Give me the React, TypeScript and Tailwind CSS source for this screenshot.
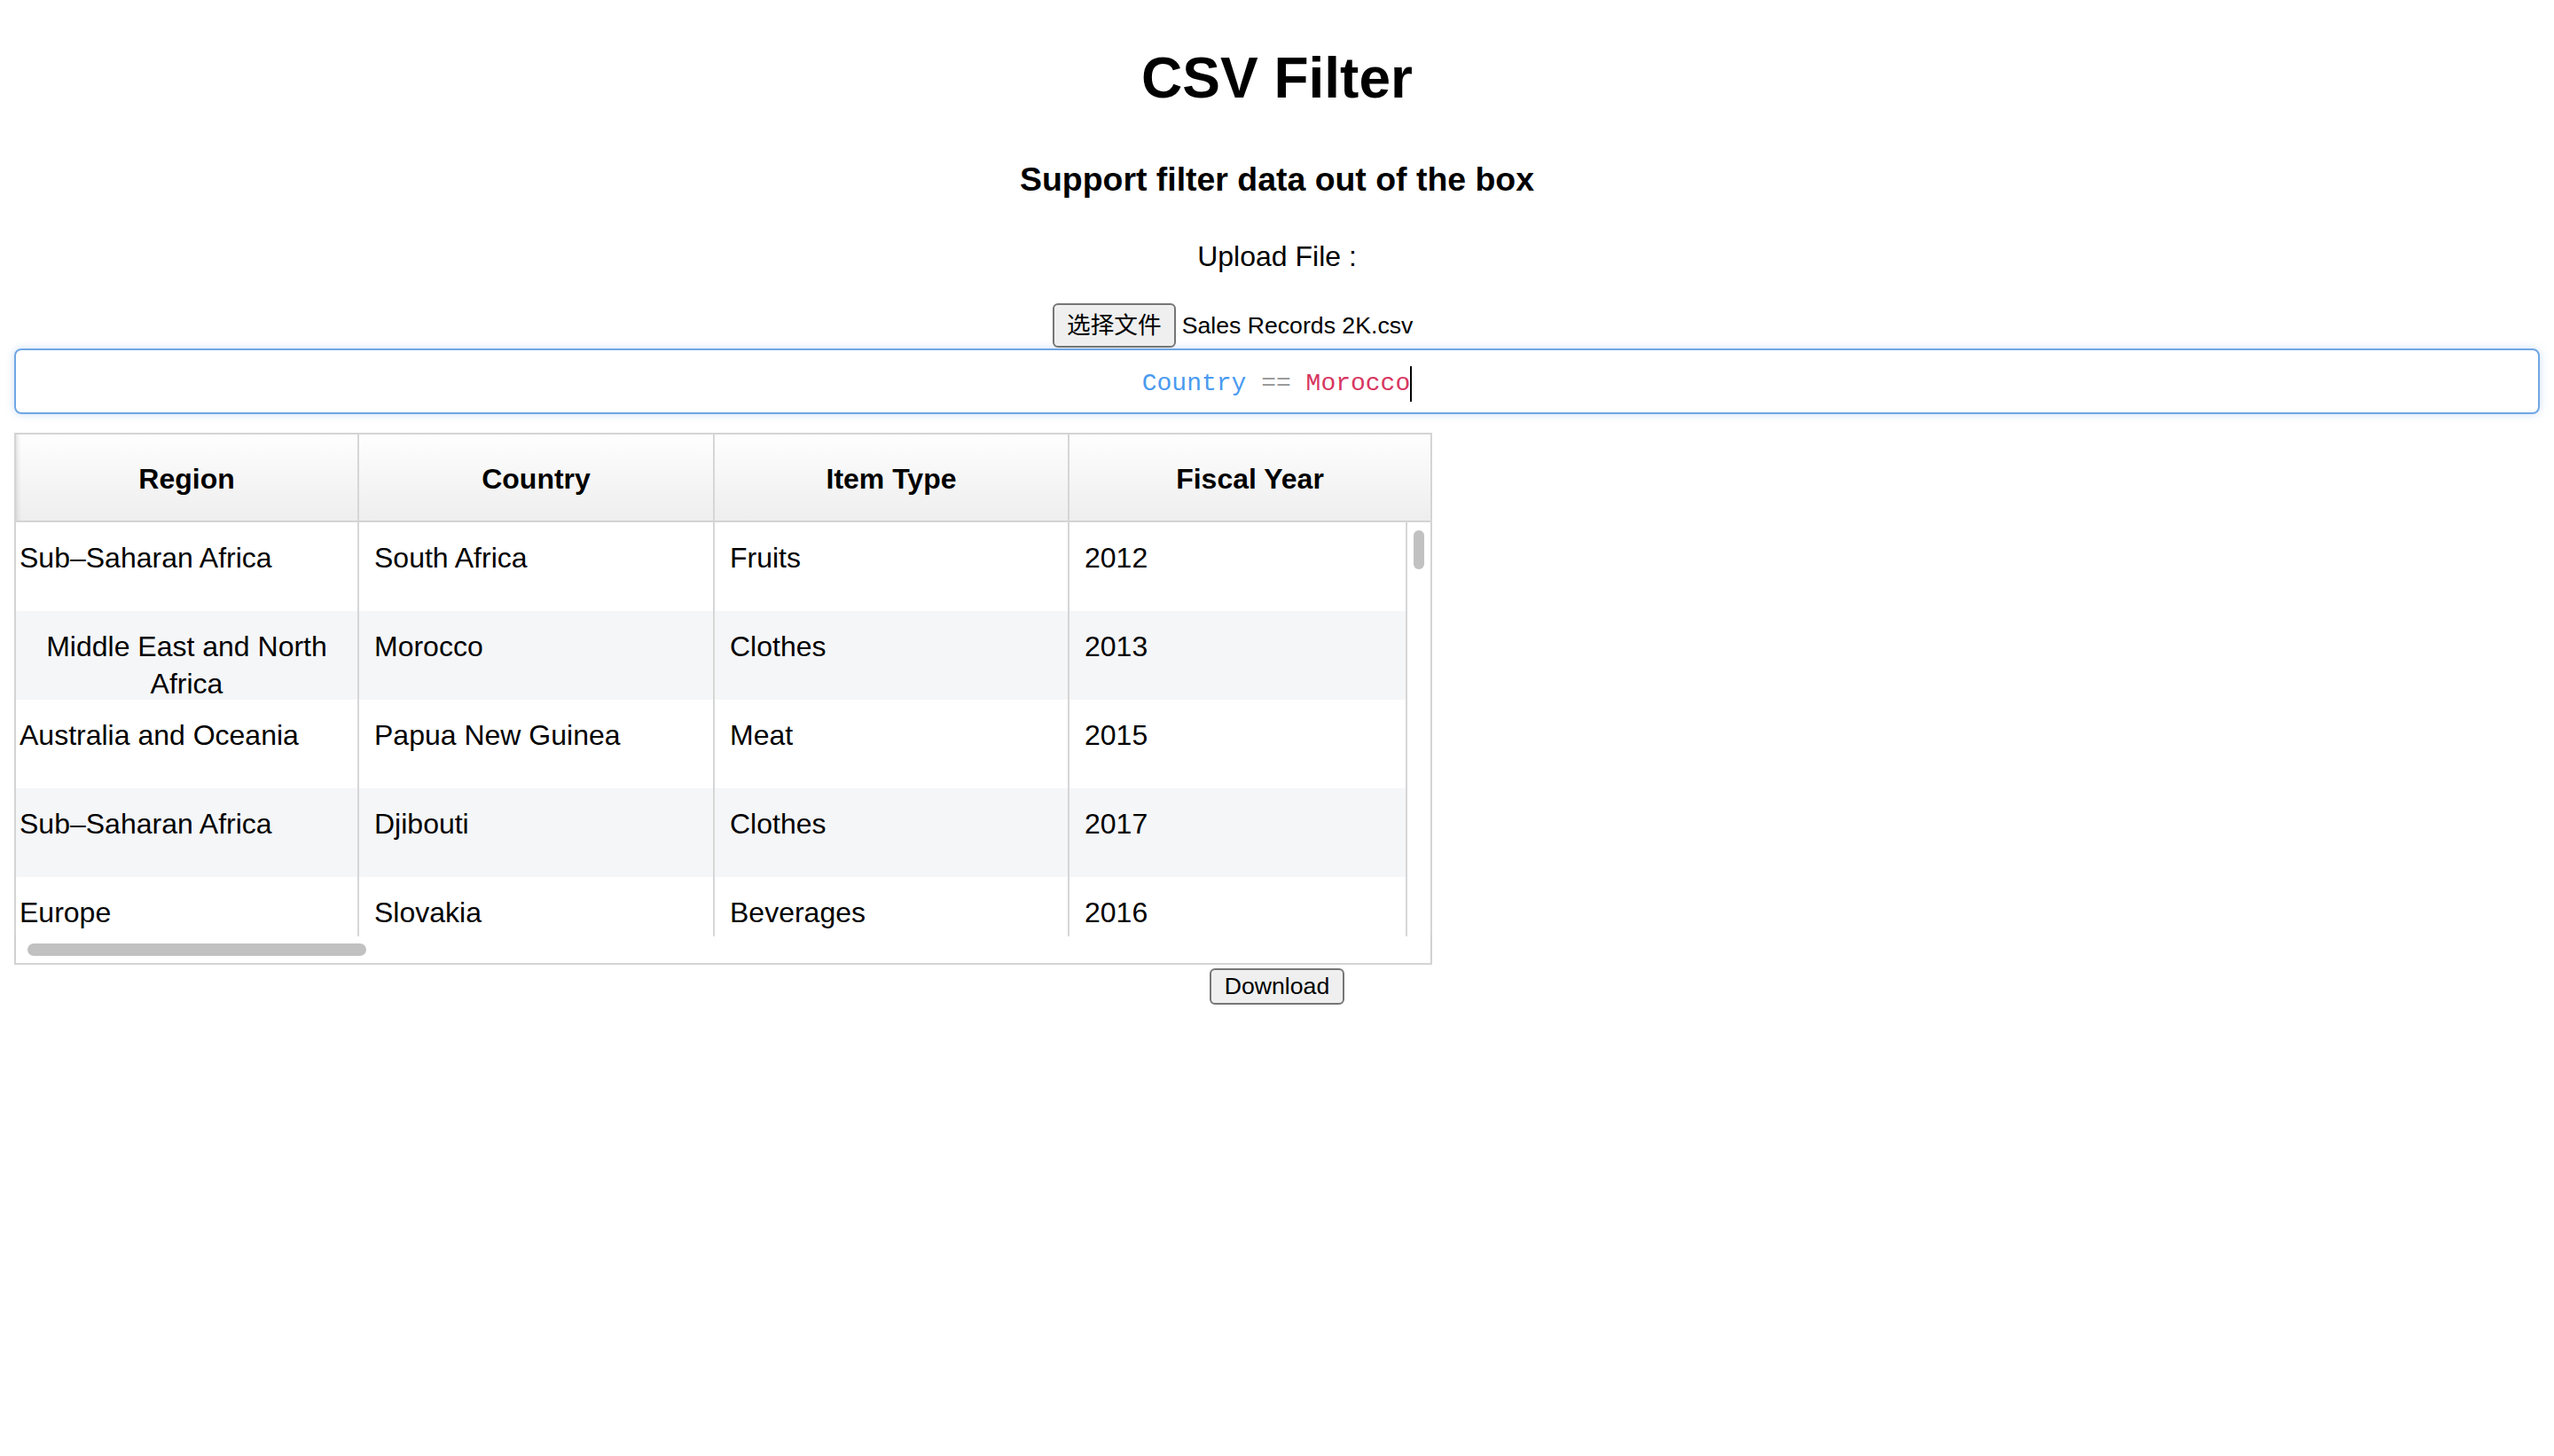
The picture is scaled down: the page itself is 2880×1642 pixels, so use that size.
import React from "react";

const rows = [
  { region: "Sub–Saharan Africa", country: "South Africa", item: "Fruits", year: "2012" },
  { region: "Middle East and North Africa", country: "Morocco", item: "Clothes", year: "2013", center: true },
  { region: "Australia and Oceania", country: "Papua New Guinea", item: "Meat", year: "2015" },
  { region: "Sub–Saharan Africa", country: "Djibouti", item: "Clothes", year: "2017" },
  { region: "Europe", country: "Slovakia", item: "Beverages", year: "2016" },
];

export default function App() {
  return (
    <div className="min-h-screen bg-white pt-[43px] pb-[40px] text-black font-['Liberation_Sans','Noto_Sans_CJK_SC',sans-serif]">
      {/* Title */}
      <h1 className="text-center text-[64px] leading-[90px] font-bold">CSV Filter</h1>
      <h3 className="mt-[43px] text-center text-[37.44px] leading-[52px] font-bold">
        Support filter data out of the box
      </h3>
      <p className="mt-[39px] text-center text-[32px] leading-[45px]">Upload File :</p>

      {/* File picker */}
      <div className="mt-[30px] flex justify-center">
        <div className="w-[506px] flex items-center gap-[7px] h-[50px]">
          <button className="h-[50px] px-[14px] bg-[#efefef] border-2 border-[#767676] rounded-[6px] text-[26.67px] leading-none">
            选择文件
          </button>
          <span className="text-[26.67px] leading-none">Sales Records 2K.csv</span>
        </div>
      </div>

      {/* Filter input */}
      <div className="mt-[1px] mx-[16px] h-[74px] pt-[5px] border-2 border-[#70a6e4] rounded-[8px] shadow-[0_0_10px_rgba(110,165,230,0.35)] flex items-center justify-center font-['Liberation_Mono',monospace] text-[28px]">
        <span className="text-[#4a9af0]">Country</span>
        <span className="text-[#9a9a9a]">&nbsp;==&nbsp;</span>
        <span className="text-[#d7365f]">Morocco</span>
        <span className="w-[2px] h-[40px] bg-black" />
      </div>

      {/* Table */}
      <div className="mt-[21px] ml-[16px] w-[1599px] border-2 border-[#d4d4d4]">
        <div className="h-[99px] grid grid-cols-[387px_401px_400px_407px] border-b-2 border-[#d4d4d4] bg-gradient-to-b from-[#fefefe] to-[#eeeeee] shadow-[inset_6px_0_6px_-6px_rgba(0,0,0,0.2)]">
          {["Region", "Country", "Item Type", "Fiscal Year"].map((h, i) => (
            <div
              key={h}
              className={`flex items-center justify-center pt-[3px] text-[32px] font-bold ${i < 3 ? "border-r-2 border-[#d6d6d6]" : ""}`}
            >
              {h}
            </div>
          ))}
        </div>

        <div className="flex h-[467px]">
          <div className="w-[1567px] overflow-hidden shadow-[inset_6px_0_6px_-6px_rgba(0,0,0,0.15)]">
            {rows.map((r, idx) => (
              <div
                key={idx}
                className={`h-[100px] shrink-0 grid grid-cols-[387px_401px_400px_379px] text-[32px] leading-[42px] ${idx % 2 === 1 ? "bg-[#f5f6f8]" : "bg-white"}`}
              >
                <div className={`pt-[19px] border-r-2 border-[#d6d6d6] ${r.center ? "px-[12px] text-center" : "pl-[4px]"}`}>
                  {r.region}
                </div>
                <div className="pt-[19px] pl-[17px] border-r-2 border-[#d6d6d6]">{r.country}</div>
                <div className="pt-[19px] pl-[17px] border-r-2 border-[#d6d6d6]">{r.item}</div>
                <div className="pt-[19px] pl-[17px]">{r.year}</div>
              </div>
            ))}
          </div>
          <div className="w-[28px] border-l-2 border-[#d6d6d6] bg-white pt-[9px] pl-[7px]">
            <div className="w-[12px] h-[44px] rounded-full bg-[#c1c1c1]" />
          </div>
        </div>

        <div className="h-[30px] bg-white pt-[8px] pl-[13px] shadow-[0_-3px_4px_rgba(0,0,0,0.05)]">
          <div className="w-[382px] h-[14px] rounded-full bg-[#c1c1c1]" />
        </div>
      </div>

      {/* Download */}
      <div className="mt-[4px] flex justify-center">
        <button className="h-[41px] px-[15px] bg-[#efefef] border-2 border-[#767676] rounded-[6px] text-[26.67px] leading-none">
          Download
        </button>
      </div>
    </div>
  );
}
